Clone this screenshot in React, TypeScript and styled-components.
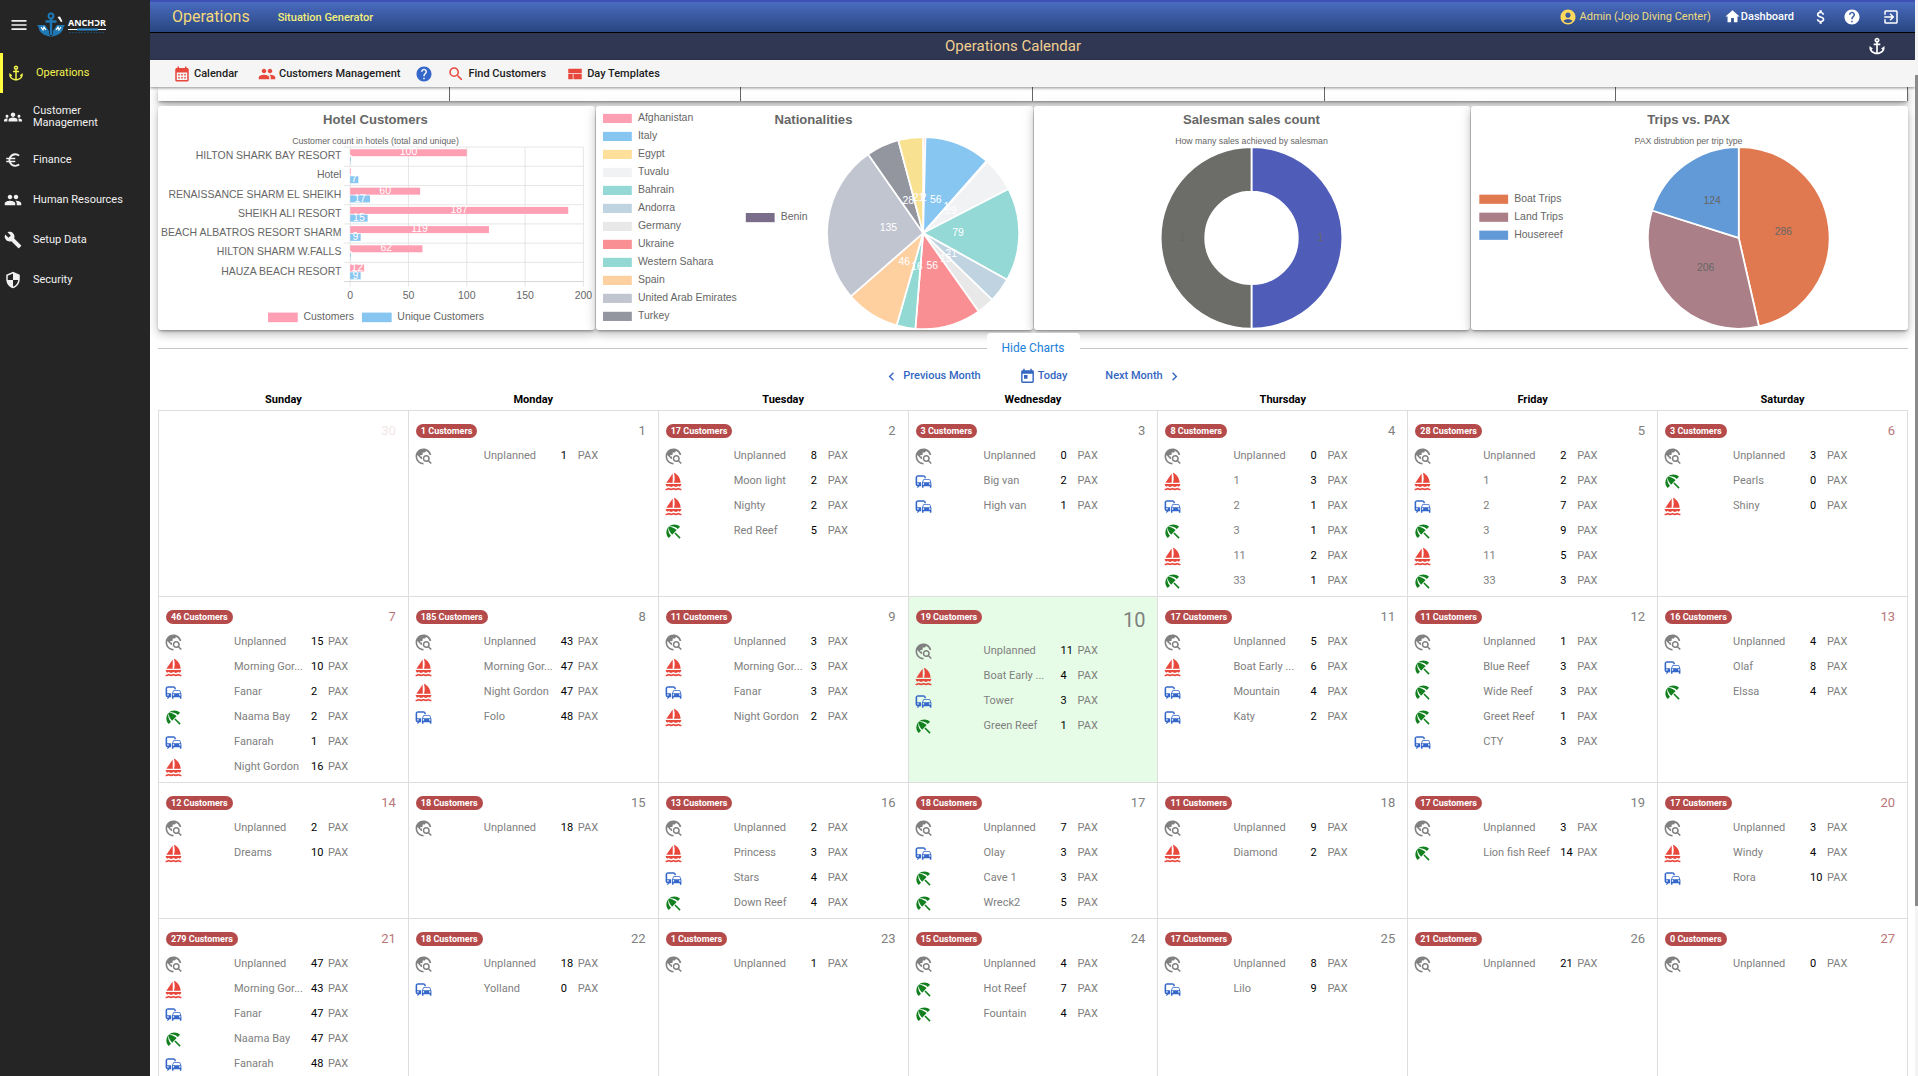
import React from 'react';
import styled, { createGlobalStyle, css } from 'styled-components';
import {
  MdAccountCircle,
  MdAnchor,
  MdAttachMoney,
  MdBeachAccess,
  MdBuild,
  MdCalendarMonth,
  MdChevronLeft,
  MdChevronRight,
  MdCommute,
  MdEuroSymbol,
  MdExitToApp,
  MdGroups,
  MdHelp,
  MdHome,
  MdMenu,
  MdPeople,
  MdSailing,
  MdSearch,
  MdSecurity,
  MdToday,
  MdTravelExplore,
} from 'react-icons/md';

const GlobalStyle = createGlobalStyle`
  *, *::before, *::after { box-sizing: border-box; }
  body {
    margin: 0;
    background: #fff;
    color: #222;
    font: 11px/14px Roboto, "Liberation Sans", sans-serif;
    overflow: hidden;
  }
  button { font: inherit; border: 0; background: none; padding: 0; cursor: pointer; }
  ul { list-style: none; margin: 0; padding: 0; }
  svg { flex: none; }
`;

/* ---------- shell ---------- */

const Shell = styled.div`
  display: flex;
  height: 100vh;
  overflow: hidden;
`;

const Sidebar = styled.nav`
  flex: none;
  width: 150px;
  background: #252525;
  color: #f1f1f1;
`;

const Brand = styled.div`
  display: flex;
  align-items: center;
  gap: 8px;
  height: 53px;
  padding: 0 0 3px 9px;
`;

const IconButton = styled.button`
  display: inline-flex;
  align-items: center;
  color: inherit;
`;

const NavLink = styled.a<{ $active?: boolean }>`
  display: grid;
  grid-template-columns: 18px 1fr;
  align-items: center;
  column-gap: 11px;
  min-height: 40px;
  padding: 0 20px 0 4px;
  font-size: 11px;
  line-height: 12px;
  color: inherit;
  text-decoration: none;
  ${(p) =>
    p.$active &&
    css`
      color: #f3f34e;
      border-left: 3px solid #ffff3f;
    `}
`;

const TallLink = styled(NavLink)`
  min-height: 47px;
`;

const Main = styled.main`
  flex: 1;
  min-width: 0;
  display: flex;
  flex-direction: column;
  overflow: hidden;
`;

const Scroller = styled.div`
  flex: none;
  width: 3px;
  padding-top: 75px;
  background: #f4f4f4;
`;

const Thumb = styled.div`
  height: 83%;
  background: #8b8b8b;
`;

/* ---------- bars ---------- */

const TopBar = styled.header`
  flex: none;
  display: flex;
  align-items: center;
  height: 33px;
  padding: 0 15px 1px 22px;
  border-top: 2px solid #3d51b4;
  border-bottom: 1px solid #000;
  background: linear-gradient(#4a6bc0, #28467f);
  color: #fff;
`;

const AppTitle = styled.h1`
  margin: 0 28px 0 0;
  font-size: 16px;
  line-height: 20px;
  font-weight: 400;
  color: #f4d97a;
`;

const TopLink = styled.a`
  padding-top: 2px;
  font-weight: 500;
  color: #f3f07c;
  text-decoration: none;
`;

const TopActions = styled.div`
  display: flex;
  align-items: center;
  gap: 13px;
  margin-left: auto;
`;

const User = styled.span`
  display: flex;
  align-items: center;
  gap: 3px;
  color: #f0dd80;
  svg { color: #ffd95c; }
`;

const HomeLink = styled.a`
  display: flex;
  align-items: center;
  margin-right: 5px;
  font-weight: 500;
  color: #fff;
  text-decoration: none;
`;

const ExitWrap = styled.span`
  display: flex;
  padding-left: 8px;
`;

const PageBar = styled.div`
  flex: none;
  display: flex;
  align-items: center;
  height: 27px;
  padding: 0 28px 1px 9px;
  background: #303753;
  color: #fff;
`;

const PageTitle = styled.h2`
  flex: 1;
  margin: 0;
  text-align: center;
  font-size: 15px;
  line-height: 20px;
  font-weight: 400;
  color: #f1cf91;
`;

const Toolbar = styled.div`
  flex: none;
  position: relative;
  z-index: 2;
  display: flex;
  align-items: center;
  height: 27px;
  padding: 0 23px;
  background: #f5f5f5;
  box-shadow: 0 1px 3px rgba(0, 0, 0, 0.45);
`;

const Tool = styled.button<{ $gap?: number }>`
  display: flex;
  align-items: center;
  gap: 3px;
  margin-right: ${(p) => p.$gap ?? 20}px;
  font-weight: 500;
  color: #1c1c1c;
  svg { color: #e8473c; }
`;

const HelpTool = styled(Tool)`
  svg { color: #3467c9; }
`;

/* ---------- content ---------- */

const Content = styled.div`
  flex: 1;
  min-height: 0;
  padding: 0 7px 0 8px;
`;

const shadow = css`
  box-shadow: 0 2px 3px -1px rgba(0, 0, 0, 0.4), 0 5px 9px rgba(0, 0, 0, 0.16), 0 1px 14px rgba(0, 0, 0, 0.12);
`;

const SummaryStrip = styled.div`
  display: grid;
  grid-template-columns: repeat(6, 1fr);
  height: 14px;
  background: #fff;
  ${shadow}
`;

const SummaryCell = styled.div`
  border-right: 1px solid #666;
`;

const Charts = styled.section`
  display: grid;
  grid-template-columns: repeat(4, 1fr);
  gap: 1px;
  margin-top: 5px;
`;

const ChartCard = styled.figure`
  margin: 0;
  border-radius: 3px;
  background: #fff;
  ${shadow}
  svg { display: block; width: 100%; height: auto; }
`;

const Divider = styled.div`
  position: relative;
  z-index: 1;
  display: flex;
  align-items: center;
  height: 30px;
  margin-top: 3px;
  background: linear-gradient(transparent 50%, #fff 50%);
  &::before,
  &::after {
    content: '';
    flex: 1;
    height: 1px;
    background: #c6c6c6;
  }
`;

const HideButton = styled.button`
  height: 30px;
  padding: 0 15px;
  border-radius: 4px 4px 0 0;
  background: #fff;
  font-size: 12px;
  color: #1a80d8;
`;

const MonthNav = styled.div`
  position: relative;
  z-index: 1;
  display: flex;
  justify-content: center;
  align-items: center;
  gap: 38px;
  height: 26px;
  background: #fff;
`;

const MonthButton = styled.button<{ $gap?: number }>`
  display: flex;
  align-items: center;
  gap: ${(p) => p.$gap ?? 3}px;
  font-weight: 500;
  color: #3567c2;
`;

const Calendar = styled.table`
  width: 100%;
  table-layout: fixed;
  border-collapse: collapse;
  background: #fff;
`;

const DayName = styled.th`
  height: 21px;
  padding: 1px 0 0;
  font-weight: 700;
  color: #000;
`;

const Day = styled.td<{ $today?: boolean }>`
  padding: 0 12px 2px 5px;
  vertical-align: top;
  border: 1px solid #dedede;
  background: ${(p) => (p.$today ? '#e6fce6' : '#fff')};
`;

const DayHead = styled.div<{ $today?: boolean }>`
  display: flex;
  justify-content: space-between;
  align-items: flex-start;
  height: ${(p) => (p.$today ? 42 : 33)}px;
  padding: 13px 0 0 2px;
`;

const Badge = styled.span`
  padding: 0 5px;
  border-radius: 7px;
  background: #b54a4a;
  color: #fff;
  font-size: 9px;
  font-weight: 700;
  line-height: 14px;
`;

const DateNumber = styled.time<{ $tone: string; $today?: boolean }>`
  margin-left: auto;
  font-size: ${(p) => (p.$today ? 20 : 13)}px;
  line-height: ${(p) => (p.$today ? 20 : 13)}px;
  color: ${(p) => p.$tone};
`;

const Trip = styled.li`
  display: grid;
  grid-template-columns: 70px 77px 17px auto;
  align-items: center;
  height: 25px;
  color: #808080;
  svg { display: block; }
`;

const TripName = styled.span`
  white-space: nowrap;
`;

const Pax = styled.span`
  color: #000;
`;

/* ---------- charts ---------- */

const ChartText = styled.text`
  font-family: "Liberation Sans", Arial, sans-serif;
  font-size: 12px;
  fill: #666;
`;

const ChartTitle = styled(ChartText)`
  font-size: 15px;
  font-weight: 700;
  text-anchor: middle;
`;

const ChartSub = styled(ChartText)`
  font-size: 10px;
  text-anchor: middle;
`;

type Entry = { label: string; color: string };
type Slice = { value: number; color: string };

function Legend({ x, y, entries }: { x: number; y: number; entries: Entry[] }) {
  return (
    <g>
      {entries.map((e, i) => (
        <g key={e.label}>
          <rect x={x} y={y + i * 20.6} width="33" height="10.5" fill={e.color} />
          <ChartText x={x + 40} y={y + i * 20.6 + 8.5}>{e.label}</ChartText>
        </g>
      ))}
    </g>
  );
}

function Pie({
  cx, cy, r, inner = 0, slices, labelR, labelColor,
}: {
  cx: number; cy: number; r: number; inner?: number; slices: Slice[]; labelR: number; labelColor: string;
}) {
  const total = slices.reduce((s, v) => s + v.value, 0);
  const at = (a: number, rad: number) => [cx + rad * Math.sin(a), cy - rad * Math.cos(a)];
  let acc = 0;
  const arcs = slices.map((s) => {
    const a0 = (acc / total) * Math.PI * 2;
    acc += s.value;
    const a1 = (acc / total) * Math.PI * 2;
    return { ...s, a0, a1 };
  });
  return (
    <g>
      {arcs.map((s, i) => {
        const big = s.a1 - s.a0 > Math.PI ? 1 : 0;
        const [x0, y0] = at(s.a0, r);
        const [x1, y1] = at(s.a1, r);
        const [x2, y2] = at(s.a1, inner);
        const [x3, y3] = at(s.a0, inner);
        const d = `M${x0} ${y0}A${r} ${r} 0 ${big} 1 ${x1} ${y1}L${x2} ${y2}A${inner} ${inner} 0 ${big} 0 ${x3} ${y3}Z`;
        return <path key={i} d={d} fill={s.color} stroke="#fff" strokeWidth="2" strokeLinejoin="bevel" />;
      })}
      {arcs.map((s, i) => {
        const [x, y] = at((s.a0 + s.a1) / 2, labelR);
        return (
          <ChartText key={i} x={x} y={y + 3} textAnchor="middle" style={{ fill: labelColor }}>
            {s.value}
          </ChartText>
        );
      })}
    </g>
  );
}

const hotels: [string, number, number][] = [
  ['HILTON SHARK BAY RESORT', 100, 0],
  ['Hotel', 0, 7],
  ['RENAISSANCE SHARM EL SHEIKH', 60, 17],
  ['SHEIKH ALI RESORT', 187, 15],
  ['BEACH ALBATROS RESORT SHARM', 119, 9],
  ['HILTON SHARM W.FALLS', 62, 0],
  ['HAUZA BEACH RESORT', 12, 9],
];

function HotelChart() {
  const left = 220;
  const top = 47;
  const scale = 1.335;
  return (
    <svg viewBox="0 0 500 257" role="img" aria-label="Hotel Customers">
      <ChartTitle x="249" y="21">Hotel Customers</ChartTitle>
      <ChartSub x="249" y="43">Customer count in hotels (total and unique)</ChartSub>
      {[0, 50, 100, 150, 200].map((v) => (
        <g key={v}>
          <line x1={left + v * scale} x2={left + v * scale} y1={top} y2={top + 160} stroke="#e2e2e2" />
          <ChartText x={left + v * scale} y="221" textAnchor="middle">{v}</ChartText>
        </g>
      ))}
      {[0, 1, 2, 3, 4, 5, 6, 7].map((i) => (
        <line key={i} x1={left - 7} x2={left + 200 * scale} y1={top + i * 22} y2={top + i * 22} stroke={i === 7 ? '#d0d0d0' : '#e2e2e2'} />
      ))}
      {hotels.map(([name, total, unique], i) => {
        const y = top + i * 22;
        return (
          <g key={name}>
            <ChartText x="210" y={y + 14} textAnchor="end">{name}</ChartText>
            <rect x={left} y={y + 2.5} width={Math.max(total * scale, 0.8)} height="8" fill="#ff9fb4" />
            <rect x={left} y={y + 11.4} width={Math.max(unique * scale, 0.8)} height="8" fill="#88c6f2" />
            <ChartText x={left + (total * scale) / 2} y={y + 9.5} textAnchor="middle" style={{ fill: '#fff' }}>{total}</ChartText>
            <ChartText x={left + (unique * scale) / 2} y={y + 18.5} textAnchor="middle" style={{ fill: '#fff' }}>{unique}</ChartText>
          </g>
        );
      })}
      <rect x="126" y="236.5" width="34" height="11" fill="#ff9fb4" />
      <ChartText x="166.5" y="245.5">Customers</ChartText>
      <rect x="233.5" y="236.5" width="34" height="11" fill="#88c6f2" />
      <ChartText x="274" y="245.5">Unique Customers</ChartText>
    </svg>
  );
}

const nations: Entry[] = [
  { label: 'Afghanistan', color: '#ff9fb4' },
  { label: 'Italy', color: '#88c6f2' },
  { label: 'Egypt', color: '#ffe09b' },
  { label: 'Tuvalu', color: '#f1f2f4' },
  { label: 'Bahrain', color: '#95d9d6' },
  { label: 'Andorra', color: '#c0d3e0' },
  { label: 'Germany', color: '#e8e8e8' },
  { label: 'Ukraine', color: '#f98f93' },
  { label: 'Western Sahara', color: '#92d9d4' },
  { label: 'Spain', color: '#fed0a0' },
  { label: 'United Arab Emirates', color: '#c1c5d0' },
  { label: 'Turkey', color: '#93969f' },
];

const nationSlices: Slice[] = [
  { value: 2, color: '#ff9fb4' },
  { value: 56, color: '#88c6f2' },
  { value: 1, color: '#ffe09b' },
  { value: 29, color: '#f1f2f4' },
  { value: 79, color: '#95d9d6' },
  { value: 21, color: '#c0d3e0' },
  { value: 15, color: '#e8e8e8' },
  { value: 56, color: '#f98f93' },
  { value: 16, color: '#92d9d4' },
  { value: 46, color: '#fed0a0' },
  { value: 135, color: '#c1c5d0' },
  { value: 28, color: '#93969f' },
  { value: 21, color: '#f9e192' },
];

const tripKinds: Entry[] = [
  { label: 'Boat Trips', color: '#e17950' },
  { label: 'Land Trips', color: '#ab7f87' },
  { label: 'Housereef', color: '#6299d7' },
];

/* ---------- calendar data ---------- */

type Kind = 'u' | 'b' | 'v' | 'r';
type DayData = { d: number; c?: number; trips?: [Kind, string, number][]; out?: boolean; today?: boolean };

const U = 'Unplanned';
const weeks: DayData[][] = [
  [
    { d: 30, out: true },
    { d: 1, c: 1, trips: [['u', U, 1]] },
    { d: 2, c: 17, trips: [['u', U, 8], ['b', 'Moon light', 2], ['b', 'Nighty', 2], ['r', 'Red Reef', 5]] },
    { d: 3, c: 3, trips: [['u', U, 0], ['v', 'Big van', 2], ['v', 'High van', 1]] },
    { d: 4, c: 8, trips: [['u', U, 0], ['b', '1', 3], ['v', '2', 1], ['r', '3', 1], ['b', '11', 2], ['r', '33', 1]] },
    { d: 5, c: 28, trips: [['u', U, 2], ['b', '1', 2], ['v', '2', 7], ['r', '3', 9], ['b', '11', 5], ['r', '33', 3]] },
    { d: 6, c: 3, trips: [['u', U, 3], ['r', 'Pearls', 0], ['b', 'Shiny', 0]] },
  ],
  [
    { d: 7, c: 46, trips: [['u', U, 15], ['b', 'Morning Gor...', 10], ['v', 'Fanar', 2], ['r', 'Naama Bay', 2], ['v', 'Fanarah', 1], ['b', 'Night Gordon', 16]] },
    { d: 8, c: 185, trips: [['u', U, 43], ['b', 'Morning Gor...', 47], ['b', 'Night Gordon', 47], ['v', 'Folo', 48]] },
    { d: 9, c: 11, trips: [['u', U, 3], ['b', 'Morning Gor...', 3], ['v', 'Fanar', 3], ['b', 'Night Gordon', 2]] },
    { d: 10, c: 19, today: true, trips: [['u', U, 11], ['b', 'Boat Early ...', 4], ['v', 'Tower', 3], ['r', 'Green Reef', 1]] },
    { d: 11, c: 17, trips: [['u', U, 5], ['b', 'Boat Early ...', 6], ['v', 'Mountain', 4], ['v', 'Katy', 2]] },
    { d: 12, c: 11, trips: [['u', U, 1], ['r', 'Blue Reef', 3], ['r', 'Wide Reef', 3], ['r', 'Greet Reef', 1], ['v', 'CTY', 3]] },
    { d: 13, c: 16, trips: [['u', U, 4], ['v', 'Olaf', 8], ['r', 'Elssa', 4]] },
  ],
  [
    { d: 14, c: 12, trips: [['u', U, 2], ['b', 'Dreams', 10]] },
    { d: 15, c: 18, trips: [['u', U, 18]] },
    { d: 16, c: 13, trips: [['u', U, 2], ['b', 'Princess', 3], ['v', 'Stars', 4], ['r', 'Down Reef', 4]] },
    { d: 17, c: 18, trips: [['u', U, 7], ['v', 'Olay', 3], ['r', 'Cave 1', 3], ['r', 'Wreck2', 5]] },
    { d: 18, c: 11, trips: [['u', U, 9], ['b', 'Diamond', 2]] },
    { d: 19, c: 17, trips: [['u', U, 3], ['r', 'Lion fish Reef', 14]] },
    { d: 20, c: 17, trips: [['u', U, 3], ['b', 'Windy', 4], ['v', 'Rora', 10]] },
  ],
  [
    { d: 21, c: 279, trips: [['u', U, 47], ['b', 'Morning Gor...', 43], ['v', 'Fanar', 47], ['r', 'Naama Bay', 47], ['v', 'Fanarah', 48], ['b', 'Night Gordon', 47]] },
    { d: 22, c: 18, trips: [['u', U, 18], ['v', 'Yolland', 0]] },
    { d: 23, c: 1, trips: [['u', U, 1]] },
    { d: 24, c: 15, trips: [['u', U, 4], ['r', 'Hot Reef', 7], ['r', 'Fountain', 4]] },
    { d: 25, c: 17, trips: [['u', U, 8], ['v', 'Lilo', 9]] },
    { d: 26, c: 21, trips: [['u', U, 21]] },
    { d: 27, c: 0, trips: [['u', U, 0]] },
  ],
];

const kindIcon: Record<Kind, React.ReactNode> = {
  u: <MdTravelExplore size={19} color="#808080" />,
  b: <MdSailing size={19} color="#e8473c" />,
  v: <MdCommute size={19} color="#3467c9" />,
  r: <MdBeachAccess size={19} color="#12801f" />,
};

const dayNames = ['Sunday', 'Monday', 'Tuesday', 'Wednesday', 'Thursday', 'Friday', 'Saturday'];

function Logo() {
  return (
    <svg width="72" height="26" viewBox="0 0 72 26" role="img" aria-label="Anchor">
      <g fill="none" stroke="#1f78b4" strokeWidth="2.4">
        <circle cx="14" cy="4" r="2.4" strokeWidth="2" />
        <path d="M14 7v16M8.5 9.5h11" />
      </g>
      <path fill="#1f78b4" d="M0 13h8l4 6v3l2 3-3-1C6 23 2 20 1.5 15ZM28 13h-8l-4 6v3l-2 3 3-1c5-1 9-4 9.5-9Z" />
      <path d="M4 15l2 3 1-3 2 3M19 18l2-3 1 3 2-3" stroke="#fff" strokeWidth="1.2" fill="none" />
      <path d="M20.5 5l2.5-.5 2.5 5-1.5.5Z" fill="#fff" />
      <text x="31" y="14" fontFamily="Noto Sans, sans-serif" fontWeight="700" fontSize="9" fill="#fff">ANCHƆR</text>
      <path d="M31 17.5h38" stroke="#fff" />
      <path d="M40 17.5h21" stroke="#2f8fd0" strokeWidth="2" />
      <path d="M32 20.5h36" stroke="#1d4663" strokeDasharray="2 1" />
    </svg>
  );
}

function TemplateIcon() {
  return (
    <svg width="18" height="18" viewBox="0 0 24 24" fill="currentColor" aria-hidden="true">
      <path d="M3 19h6v-7H3v7zm7 0h11v-7H10v7zM3 5v6h18V5H3z" />
    </svg>
  );
}

function DayCell({ day, weekend }: { day: DayData; weekend: boolean }) {
  const tone = day.out ? '#f3e6e6' : weekend ? '#b9777b' : '#808080';
  return (
    <Day $today={day.today}>
      <DayHead $today={day.today}>
        {day.c !== undefined && <Badge>{day.c} Customers</Badge>}
        <DateNumber $tone={tone} $today={day.today}>{day.d}</DateNumber>
      </DayHead>
      <ul>
        {day.trips?.map(([kind, name, pax], i) => (
          <Trip key={i}>
            {kindIcon[kind]}
            <TripName>{name}</TripName>
            <Pax>{pax}</Pax>
            <span>PAX</span>
          </Trip>
        ))}
      </ul>
    </Day>
  );
}

export default function App() {
  return (
    <Shell>
      <GlobalStyle />
      <Sidebar>
        <Brand>
          <IconButton aria-label="Menu"><MdMenu size={20} /></IconButton>
          <Logo />
        </Brand>
        <NavLink href="#operations" $active><MdAnchor size={18} />Operations</NavLink>
        <TallLink href="#customers"><MdGroups size={18} />Customer Management</TallLink>
        <NavLink href="#finance"><MdEuroSymbol size={18} />Finance</NavLink>
        <NavLink href="#hr"><MdPeople size={18} />Human Resources</NavLink>
        <NavLink href="#setup"><MdBuild size={18} />Setup Data</NavLink>
        <NavLink href="#security"><MdSecurity size={18} />Security</NavLink>
      </Sidebar>
      <Main>
        <TopBar>
          <AppTitle>Operations</AppTitle>
          <TopLink href="#generator">Situation Generator</TopLink>
          <TopActions>
            <User><MdAccountCircle size={18} />Admin (Jojo Diving Center)</User>
            <HomeLink href="#dashboard"><MdHome size={17} />Dashboard</HomeLink>
            <IconButton aria-label="Currency"><MdAttachMoney size={18} /></IconButton>
            <IconButton aria-label="Help"><MdHelp size={18} /></IconButton>
            <ExitWrap><IconButton aria-label="Log out"><MdExitToApp size={18} /></IconButton></ExitWrap>
          </TopActions>
        </TopBar>
        <PageBar>
          <PageTitle>Operations Calendar</PageTitle>
          <IconButton aria-label="Anchor"><MdAnchor size={20} /></IconButton>
        </PageBar>
        <Toolbar>
          <Tool><MdCalendarMonth size={18} />Calendar</Tool>
          <Tool $gap={15}><MdPeople size={18} />Customers Management</Tool>
          <HelpTool $gap={14} aria-label="Help"><MdHelp size={18} /></HelpTool>
          <Tool><MdSearch size={18} />Find Customers</Tool>
          <Tool><TemplateIcon />Day Templates</Tool>
        </Toolbar>
        <Content>
          <SummaryStrip>
            {[0, 1, 2, 3, 4, 5].map((i) => <SummaryCell key={i} />)}
          </SummaryStrip>
          <Charts>
            <ChartCard><HotelChart /></ChartCard>
            <ChartCard>
              <svg viewBox="0 0 500 257" role="img" aria-label="Nationalities">
                <ChartTitle x="249" y="21">Nationalities</ChartTitle>
                <Legend x={8} y={9} entries={nations} />
                <Legend x={171.5} y={122.5} entries={[{ label: 'Benin', color: '#7a6d8a' }]} />
                <Pie cx={374.5} cy={145.5} r={110} slices={nationSlices} labelR={40} labelColor="#fff" />
              </svg>
            </ChartCard>
            <ChartCard>
              <svg viewBox="0 0 500 257" role="img" aria-label="Salesman sales count">
                <ChartTitle x="249" y="21">Salesman sales count</ChartTitle>
                <ChartSub x="249" y="43">How many sales achieved by salesman</ChartSub>
                <Pie cx={249} cy={151} r={104} inner={53} labelR={79} labelColor="#666"
                  slices={[{ value: 1, color: '#4f5db9' }, { value: 1, color: '#6c6d68' }]} />
              </svg>
            </ChartCard>
            <ChartCard>
              <svg viewBox="0 0 500 257" role="img" aria-label="Trips vs. PAX">
                <ChartTitle x="249" y="21">Trips vs. PAX</ChartTitle>
                <ChartSub x="249" y="43">PAX distrubtion per trip type</ChartSub>
                <Legend x={9.5} y={101.5} entries={tripKinds} />
                <Pie cx={306.5} cy={151} r={104} labelR={51.5} labelColor="#666"
                  slices={[{ value: 286, color: '#e17950' }, { value: 206, color: '#ab7f87' }, { value: 124, color: '#6299d7' }]} />
              </svg>
            </ChartCard>
          </Charts>
          <Divider><HideButton>Hide Charts</HideButton></Divider>
          <MonthNav>
            <MonthButton><MdChevronLeft size={17} />Previous Month</MonthButton>
            <MonthButton $gap={2}><MdToday size={17} />Today</MonthButton>
            <MonthButton>Next Month<MdChevronRight size={17} /></MonthButton>
          </MonthNav>
          <Calendar>
            <thead>
              <tr>{dayNames.map((n) => <DayName key={n} scope="col">{n}</DayName>)}</tr>
            </thead>
            <tbody>
              {weeks.map((week, w) => (
                <tr key={w}>
                  {week.map((day, i) => (
                    <DayCell key={day.d} day={day} weekend={i === 0 || i === 6} />
                  ))}
                </tr>
              ))}
            </tbody>
          </Calendar>
        </Content>
      </Main>
      <Scroller aria-hidden="true"><Thumb /></Scroller>
    </Shell>
  );
}
